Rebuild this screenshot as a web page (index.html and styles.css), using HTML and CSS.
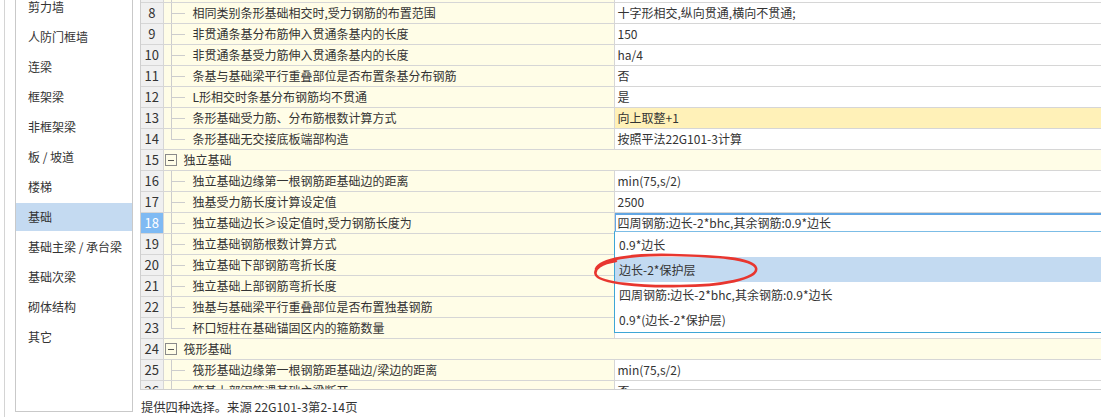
FILE: index.html
```html
<!DOCTYPE html>
<html lang="zh-CN">
<head>
   <meta charset="UTF-8">
   <title>计算设置 - 基础</title>
   <link rel="stylesheet" href="styles.css">
</head>
<body>
<div class="frame">
   <div class="sidebar">
      <ul class="menu">
         <li class="menu-item">剪力墙</li>
         <li class="menu-item">人防门框墙</li>
         <li class="menu-item">连梁</li>
         <li class="menu-item">框架梁</li>
         <li class="menu-item">非框架梁</li>
         <li class="menu-item">板 / 坡道</li>
         <li class="menu-item">楼梯</li>
         <li class="menu-item active">基础</li>
         <li class="menu-item">基础主梁 / 承台梁</li>
         <li class="menu-item">基础次梁</li>
         <li class="menu-item">砌体结构</li>
         <li class="menu-item">其它</li>
      </ul>
   </div>

   <div class="main">
      <div class="grid">
         <table class="settings">
            <colgroup>
               <col class="col-num">
               <col class="col-name">
               <col class="col-val">
            </colgroup>
            <tr><td class="num">7</td><td class="name"><div class="cell"><span class="branch"></span></div></td><td class="val"></td></tr>
            <tr><td class="num">8</td><td class="name"><div class="cell"><span class="branch"></span>相同类别条形基础相交时,受力钢筋的布置范围</div></td><td class="val">十字形相交,纵向贯通,横向不贯通;</td></tr>
            <tr><td class="num">9</td><td class="name"><div class="cell"><span class="branch"></span>非贯通条基分布筋伸入贯通条基内的长度</div></td><td class="val">150</td></tr>
            <tr><td class="num">10</td><td class="name"><div class="cell"><span class="branch"></span>非贯通条基受力筋伸入贯通条基内的长度</div></td><td class="val">ha/4</td></tr>
            <tr><td class="num">11</td><td class="name"><div class="cell"><span class="branch"></span>条基与基础梁平行重叠部位是否布置条基分布钢筋</div></td><td class="val">否</td></tr>
            <tr><td class="num">12</td><td class="name"><div class="cell"><span class="branch"></span>L形相交时条基分布钢筋均不贯通</div></td><td class="val">是</td></tr>
            <tr><td class="num">13</td><td class="name"><div class="cell"><span class="branch"></span>条形基础受力筋、分布筋根数计算方式</div></td><td class="val changed">向上取整+1</td></tr>
            <tr><td class="num">14</td><td class="name"><div class="cell"><span class="branch last"></span>条形基础无交接底板端部构造</div></td><td class="val">按照平法22G101-3计算</td></tr>
            <tr><td class="num">15</td><td class="name group" colspan="2"><div class="cell"><span class="toggle"></span>独立基础</div></td></tr>
            <tr><td class="num">16</td><td class="name"><div class="cell"><span class="branch"></span>独立基础边缘第一根钢筋距基础边的距离</div></td><td class="val">min(75,s/2)</td></tr>
            <tr><td class="num">17</td><td class="name"><div class="cell"><span class="branch"></span>独基受力筋长度计算设定值</div></td><td class="val">2500</td></tr>
            <tr><td class="num current">18</td><td class="name"><div class="cell"><span class="branch"></span>独立基础边长≥设定值时,受力钢筋长度为</div></td><td class="val editing">四周钢筋:边长-2*bhc,其余钢筋:0.9*边长</td></tr>
            <tr><td class="num">19</td><td class="name"><div class="cell"><span class="branch"></span>独立基础钢筋根数计算方式</div></td><td class="val"></td></tr>
            <tr><td class="num">20</td><td class="name"><div class="cell"><span class="branch"></span>独立基础下部钢筋弯折长度</div></td><td class="val"></td></tr>
            <tr><td class="num">21</td><td class="name"><div class="cell"><span class="branch"></span>独立基础上部钢筋弯折长度</div></td><td class="val"></td></tr>
            <tr><td class="num">22</td><td class="name"><div class="cell"><span class="branch"></span>独基与基础梁平行重叠部位是否布置独基钢筋</div></td><td class="val"></td></tr>
            <tr><td class="num">23</td><td class="name"><div class="cell"><span class="branch last"></span>杯口短柱在基础锚固区内的箍筋数量</div></td><td class="val"></td></tr>
            <tr><td class="num">24</td><td class="name group" colspan="2"><div class="cell"><span class="toggle"></span>筏形基础</div></td></tr>
            <tr><td class="num">25</td><td class="name"><div class="cell"><span class="branch"></span>筏形基础边缘第一根钢筋距基础边/梁边的距离</div></td><td class="val">min(75,s/2)</td></tr>
            <tr><td class="num">26</td><td class="name"><div class="cell"><span class="branch"></span>筏基上部钢筋遇基础主梁断开</div></td><td class="val">否</td></tr>
         </table>

         <!-- выпадающий список для строки 18 -->
         <ul class="dropdown">
            <li class="option">0.9*边长</li>
            <li class="option hover">边长-2*保护层</li>
            <li class="option">四周钢筋:边长-2*bhc,其余钢筋:0.9*边长</li>
            <li class="option">0.9*(边长-2*保护层)</li>
         </ul>

         <svg class="mark" width="200" height="50" viewBox="0 0 200 50">
            <path d="M 16 21 C 20 11, 52 6, 92 7 C 134 8, 173 10, 176 20 C 179 31, 140 38, 100 38 C 60 39, 20 35, 16 27 C 13 21, 22 15, 36 13"
                  fill="none" stroke="#e8362f" stroke-width="2.6" stroke-linecap="round"/>
         </svg>
      </div>
      <div class="status">提供四种选择。来源 22G101-3第2-14页</div>
   </div>
</div>
</body>
</html>
```

FILE: styles.css
```css
html,
body {
   margin: 0;
   padding: 0;
   height: 417px;
   overflow: hidden;
   background: #fff;
}

body {
   font: 12px "Noto Sans CJK SC", "Liberation Sans", sans-serif;
   color: #333;
   padding-left: 4px;
}

.frame {
   display: flex;
   height: 417px;
   border-left: 1px solid #d4d4d4;
   padding-left: 10px;
}

/* левое меню */
.sidebar {
   width: 116px;
   height: 411px;
   border: 1px solid #c9c9c9;
   border-top: none;
   overflow: hidden;
   margin-right: 7px;
   flex-shrink: 0;
}

.menu {
   display: flex; /* чтобы margin у пунктов не схлопывались */
   flex-direction: column;
   list-style: none;
   margin: -8px 0 0;
   padding: 0;
}

.menu-item {
   height: 28px;
   line-height: 28px;
   margin: 1px 0;
   padding-left: 12px;
   white-space: nowrap;
}

.menu-item.active {
   background-color: #c4daf1;
}

/* таблица */
.main {
   flex: 1;
   display: flex;
   flex-direction: column;
   min-width: 0;
}

.grid {
   position: relative;
   height: 390px;
   overflow: hidden;
   border-left: 1px solid #cfcfcf;
   border-bottom: 1px solid #cfcfcf;
}

.settings {
   border-collapse: collapse;
   table-layout: fixed;
   width: 1000px;
   margin-top: -19px;
}

.col-num {
   width: 22px;
}

.col-name {
   width: 451px;
}

.settings td {
   height: 20px;
   padding: 0;
   line-height: 20px;
   border: 1px solid #d6d6d6;
   white-space: nowrap;
   overflow: hidden;
}

.settings td:first-child {
   border-left: none;
}

.num {
   background-color: #f0f0f0;
   text-align: center;
   font-size: 13px;
}

.num.current {
   background-color: #7fbaf3;
   color: #fff;
}

.name {
   background-color: #fffde7;
}

.cell {
   display: flex;
   align-items: center;
   height: 20px;
   padding-left: 7px;
}

.branch {
   align-self: stretch;
   width: 22px;
   flex-shrink: 0;
   background:
      linear-gradient(#cdcdcd, #cdcdcd) 0 0 / 1px 100% no-repeat,
      linear-gradient(#cdcdcd, #cdcdcd) 0 50% / 14px 1px no-repeat;
}

.branch.last {
   background-size: 1px 50%, 14px 1px;
}

.group .cell {
   padding-left: 1px;
}

.toggle {
   position: relative;
   width: 10px;
   height: 10px;
   border: 1px solid #8a8a8a;
   margin-right: 7px;
   flex-shrink: 0;
}

.toggle::after {
   content: "";
   position: absolute;
   left: 2px;
   right: 2px;
   top: 5px;
   height: 1px;
   background: #555;
}

.val {
   padding-left: 3px !important;
   background-color: #fff;
}

.val.changed {
   background-color: #fff1b8;
}

.val.editing {
   box-shadow: inset 1px 2px 0 #62a6e3;
}

/* выпадающий список */
.dropdown {
   position: absolute;
   left: 473px;
   top: 231px;
   right: -5px;
   margin: 0;
   padding: 0;
   list-style: none;
   background: #fff;
   border: 1px solid #3ea6d6;
   border-top-color: #7cbde6;
}

.option {
   height: 25px;
   line-height: 25px;
   padding-left: 4px;
   white-space: nowrap;
}

.option.hover {
   background-color: #c3daf1;
}

.mark {
   position: absolute;
   left: 439px;
   top: 248px;
}

.status {
   padding: 7px 0 0 1px;
   line-height: 20px;
   font-size: 12.3px;
}
```
